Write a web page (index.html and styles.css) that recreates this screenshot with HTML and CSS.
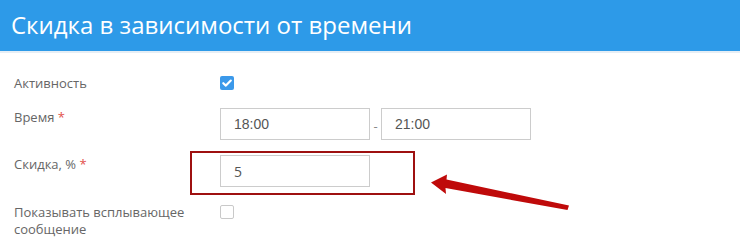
FILE: index.html
```html
<!DOCTYPE html>
<html lang="ru">
<head>
<meta charset="utf-8">
<title>Скидка в зависимости от времени</title>
<link rel="stylesheet" href="styles.css">
</head>
<body>
<div class="page">
  <header class="header">
    <h1 class="title">Скидка в зависимости от времени</h1>
  </header>
  <form class="form">
    <div class="row row-active">
      <div class="label">Активность</div>
      <div class="field"><span class="check checked"><svg viewBox="0 0 14 14" width="14" height="14"><path d="M3.3 7.2 L5.9 9.6 L10.8 4.6" fill="none" stroke="#fff" stroke-width="2.2" stroke-linecap="round" stroke-linejoin="round"/></svg></span></div>
    </div>
    <div class="row row-time">
      <div class="label">Время <span class="req">*</span></div>
      <div class="field time">
        <div class="input">18:00</div>
        <span class="dash">-</span>
        <div class="input">21:00</div>
      </div>
    </div>
    <div class="row row-discount">
      <div class="label">Скидка, % <span class="req">*</span></div>
      <div class="field highlight">
        <div class="input">5</div>
      </div>
    </div>
    <div class="row row-popup">
      <div class="label">Показывать всплывающее сообщение</div>
      <div class="field"><span class="check"></span></div>
    </div>
  </form>
  <svg class="arrow" viewBox="0 0 740 243" width="740" height="243">
    <polygon points="431,182.5 447,174.5 446.5,179.5 569,205.5 567.5,210 445.5,188 446,194" fill="#bf0a0a"/>
  </svg>
</div>
</body>
</html>
```

FILE: styles.css
```css
html, body {
  margin: 0;
  padding: 0;
  background: #ffffff;
}

.page {
  position: relative;
  width: 740px;
  height: 243px;
  overflow: hidden;
  font-family: "Open Sans", "Liberation Sans", sans-serif;
}

.header {
  height: 51px;
  background: #2d9ae8;
  border-bottom: 2px solid #e6eef5;
  display: flex;
  align-items: center;
  padding-left: 11px;
}

.title {
  margin: 0;
  font-weight: 400;
  font-size: 24px;
  color: #ffffff;
  line-height: 32px;
  padding-bottom: 2px;
}

.form {
  display: flex;
  flex-direction: column;
  padding-top: 21px;
  padding-left: 14px;
}

.row {
  display: grid;
  grid-template-columns: 206px 1fr;
  align-items: start;
}

.row-time { margin-top: 16px; }
.row-discount { margin-top: 15px; }
.row-popup { margin-top: 17px; }

.label {
  font-size: 13px;
  line-height: 18px;
  color: #666666;
  width: 180px;
}

.row-popup .label {
  line-height: 17px;
}

.req {
  color: #e2504a;
}

.field {
  display: flex;
  align-items: center;
}

.check {
  box-sizing: border-box;
  display: inline-flex;
  width: 14px;
  height: 14px;
  border: 1px solid #c9c9c9;
  border-radius: 2px;
  background: #fff;
  margin-top: 2px;
}

.row-popup .check {
  margin-top: 1px;
}

.check.checked {
  border: none;
  background: #3b99ea;
}

.input {
  box-sizing: border-box;
  width: 150px;
  height: 32px;
  border: 1px solid #cccccc;
  padding-left: 13px;
  display: flex;
  align-items: center;
  font-family: "Liberation Sans", Arial, sans-serif;
  font-size: 14px;
  color: #555555;
}

.row-discount .input {
  font-family: "Open Sans", "Liberation Sans", sans-serif;
}

.dash {
  width: 11px;
  text-align: center;
  font-size: 13px;
  color: #888;
  padding-top: 3px;
}

.highlight {
  position: relative;
}

.highlight::before {
  content: "";
  position: absolute;
  left: -30px;
  top: -4px;
  width: 225px;
  height: 44px;
  box-sizing: border-box;
  border: 2px solid #9e1010;
  pointer-events: none;
}

.arrow {
  position: absolute;
  left: 0;
  top: 0;
  pointer-events: none;
}
```
